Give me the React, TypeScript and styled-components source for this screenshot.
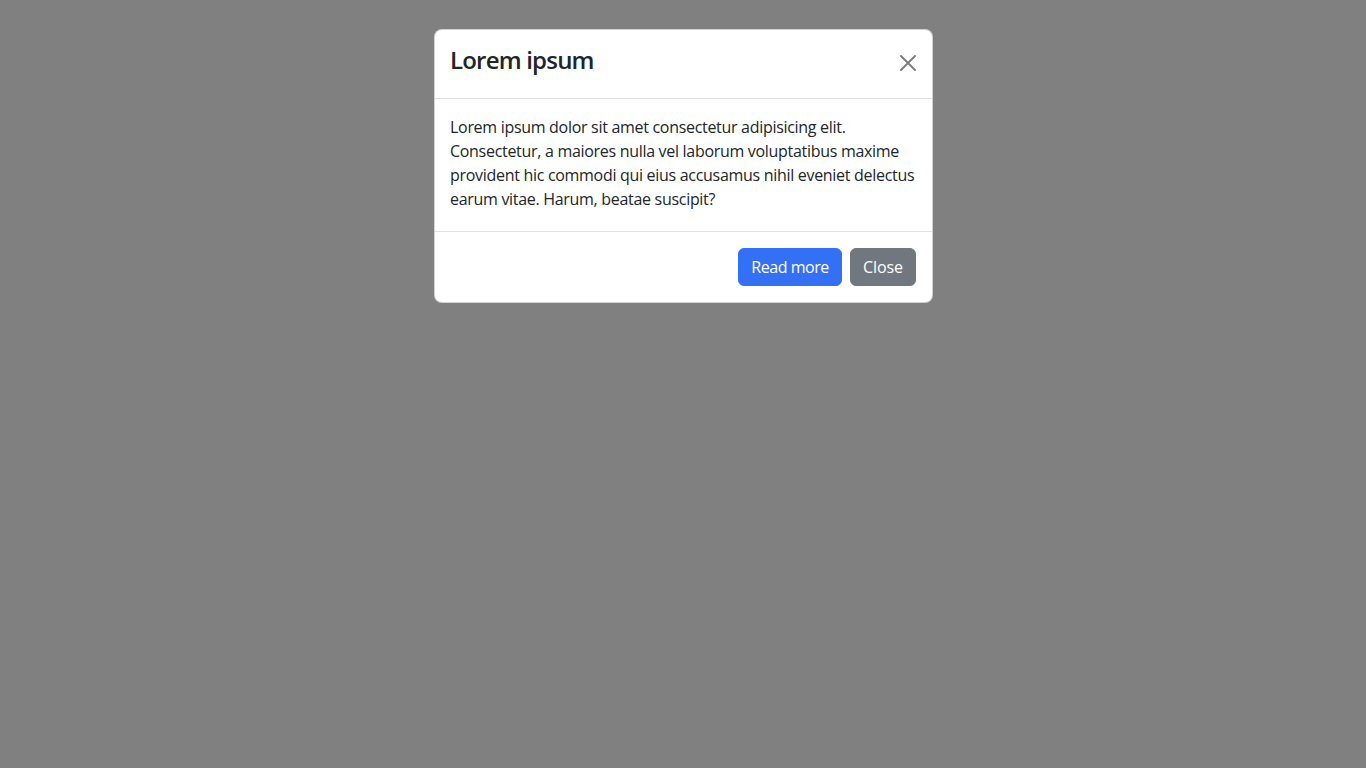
import React from "react";
import styled, { createGlobalStyle } from "styled-components";

const GlobalStyle = createGlobalStyle`
  html, body {
    margin: 0;
    padding: 0;
    background: #808080;
    font-family: "Open Sans", "Noto Sans", sans-serif;
    color: #212529;
  }
  #root {
    min-height: 100vh;
  }
`;

const Backdrop = styled.div`
  min-height: 100vh;
  display: flex;
  flex-direction: column;
  align-items: center;
  padding: 29px 0 0 1px;
  box-sizing: border-box;
`;

const Dialog = styled.div`
  width: 499px;
  box-sizing: border-box;
  background: #fff;
  border: 1px solid rgba(0, 0, 0, 0.175);
  border-radius: 8px;
  display: flex;
  flex-direction: column;
`;

const Header = styled.div`
  display: flex;
  align-items: center;
  justify-content: space-between;
  padding: 16px 16px 16px 15px;
  border-bottom: 1px solid #dee2e6;
`;

const Title = styled.h4`
  margin: 0;
  padding-bottom: 8px;
  height: 28px;
  font-size: 24px;
  line-height: 28px;
  font-weight: 600;
  letter-spacing: -0.8px;
  color: #212529;
`;

const CloseX = styled.button`
  width: 24px;
  height: 24px;
  padding: 4px;
  margin: -10px -4px -8px auto;
  border: 0;
  background: transparent;
  opacity: 0.5;
  display: flex;
  align-items: center;
  justify-content: center;
  cursor: pointer;
`;

const Body = styled.div`
  padding: 16px 16px 20px 15px;
`;

const Text = styled.p`
  margin: 0;
  font-size: 16px;
  line-height: 24px;
  letter-spacing: -0.3px;
  white-space: nowrap;
  color: #212529;
`;

const Footer = styled.div`
  display: flex;
  justify-content: flex-end;
  align-items: center;
  gap: 8px;
  padding: 16px;
  border-top: 1px solid #dee2e6;
`;

const Button = styled.button<{ $variant: "primary" | "secondary" }>`
  font-family: "Open Sans", "Noto Sans", sans-serif;
  font-size: 16px;
  line-height: 24px;
  letter-spacing: ${(p) => (p.$variant === "primary" ? "-0.45px" : "-0.05px")};
  padding: 6px 12px;
  border-radius: 6px;
  color: #fff;
  border: 1px solid ${(p) => (p.$variant === "primary" ? "#3470f5" : "#71777e")};
  background: ${(p) => (p.$variant === "primary" ? "#3470f5" : "#71777e")};
  cursor: pointer;
`;

export default function App() {
  return (
    <>
      <GlobalStyle />
      <Backdrop>
        <Dialog role="dialog">
          <Header>
            <Title>Lorem ipsum</Title>
            <CloseX aria-label="Close">
              <svg width="16" height="16" viewBox="0 0 16 16">
                <path
                  fill="#000"
                  d="M.293.293a1 1 0 0 1 1.414 0L8 6.586 14.293.293a1 1 0 1 1 1.414 1.414L9.414 8l6.293 6.293a1 1 0 0 1-1.414 1.414L8 9.414l-6.293 6.293a1 1 0 0 1-1.414-1.414L6.586 8 .293 1.707a1 1 0 0 1 0-1.414z"
                />
              </svg>
            </CloseX>
          </Header>
          <Body>
            <Text>
              Lorem ipsum dolor sit amet consectetur adipisicing elit.
              <br />
              Consectetur, a maiores nulla vel laborum voluptatibus maxime
              <br />
              provident hic commodi qui eius accusamus nihil eveniet delectus
              <br />
              earum vitae. Harum, beatae suscipit?
            </Text>
          </Body>
          <Footer>
            <Button $variant="primary">Read more</Button>
            <Button $variant="secondary">Close</Button>
          </Footer>
        </Dialog>
      </Backdrop>
    </>
  );
}
